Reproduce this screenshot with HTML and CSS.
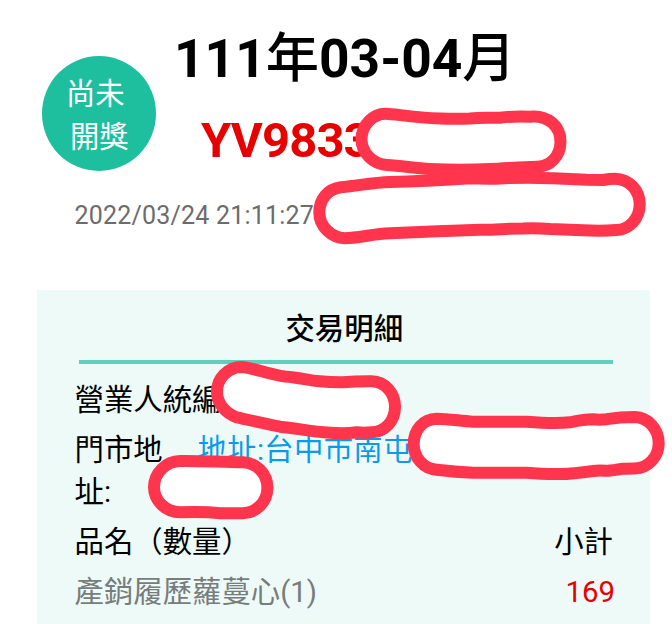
FILE: index.html
```html
<!DOCTYPE html>
<html lang="zh-Hant">
<head>
<meta charset="utf-8">
<title>交易明細</title>
<link rel="stylesheet" href="styles.css">
</head>
<body>
<main class="screen">
  <header class="summary">
    <div class="status"><span>尚未</span><span class="status-second">開獎</span></div>
    <div class="invoice">
      <h1 class="period">111<b>年</b>03-04<b>月</b></h1>
      <div class="number">YV9833</div>
    </div>
  </header>
  <time class="issued">2022/03/24 21:11:27</time>
  <section class="card">
    <h2 class="card-title">交易明細</h2>
    <div class="row">營業人統編</div>
    <div class="row"><span class="label">門市地址:</span><a class="address">地址:台中市南屯</a></div>
    <div class="row"><span>品名（數量）</span><span class="amount">小計</span></div>
    <div class="row item"><span>產銷履歷蘿蔓心(1)</span><span class="amount price">169</span></div>
  </section>
  <svg class="marks" width="672" height="624" viewBox="0 0 672 624">
    <path d="M386 113.7C396 114 412 117.5 440 118.5Q455 119 470 118.5C482 117 492 118 500 117.7Q515 116 530 116.7C548 115 560.5 126 560.5 141.7C560.5 156 550 167 537 166.7C520 167 505 168.5 490 169Q460 170.5 430 169C415 168 402 166 387 165C373 164 361.5 153 361.5 139.3C361.5 125 373 113.5 386 113.7Z"/>
    <path d="M341 187.3C365 184.5 375 182.5 390 182Q425 181 466.7 178.5C480 178.5 490 179 500 178.5Q525 177 553 178.3L586.7 179.7L603 180C608 179 612 178.7 615 178.7C629 179 639.7 190 639.7 204.3C639.7 219 629 229.5 616.7 230C605 231 595 231 583 230.3L550 229Q535 228 523 228.5C505 228.5 495 230 480 229.7Q440 231 390 233.3C373 234 358 238 345 238.2C331 238 319.3 226 319.3 212.5C319.3 199 328 189 341 187.3Z"/>
    <path d="M241.7 366.9C251 367 270 375 285 376.5C300 377.5 308 380.5 320 381.3Q332 382.5 343 382.3Q357 381 371.7 381.2C385 381.5 395 393 395 406.7C395 421 385 432 371.7 432.3Q364 433 356.7 432.3Q345 434 330 432.8C310 431.5 298 428.5 280 426.7C262 423.5 250 420 236.7 417.3C225 413 217 403 217 391.7C217 378 228 367 241.7 366.9Z"/>
    <path d="M436.7 418.8C450 419 460 421 473 421.7H526.7Q555 424 570 422.3Q585 419.3 593 419.3Q600 420 606.7 419.2Q620 417 635 417C648 417.5 658.7 429 658.7 443.3C658.7 457 648 468 635 468.4L623 468.7Q611 471 606 470.7Q598 470 593 471Q570 474.5 556.7 474Q540 474 526.7 472.7H473Q455 472 436.7 469.7C423 469 413.7 457 413.7 444C413.7 430 423 419 436.7 418.8Z"/>
    <path d="M180 461C195 460.5 220 462 243.3 462.3C256 463 267.4 473 267.4 487.7C267.4 502 256 513 243 513.2H220Q205 511.5 180 512.3C166 512.3 154 501 154 487.3C154 473 166 461.2 180 461Z"/>
  </svg>
</main>
</body>
</html>
```
FILE: styles.css
```css
* { box-sizing: border-box; }
body {
  margin: 0;
  background: #fff;
  color: #000;
  font-family: Roboto, "Noto Sans CJK TC", sans-serif;
}
.screen {
  position: relative;
  width: 672px;
  height: 624px;
  overflow: hidden;
}
.summary { display: flex; height: 190px; padding-left: 42px; }
.status {
  display: flex;
  flex-direction: column;
  width: 114px;
  height: 115px;
  margin-top: 56px;
  padding: 17px 0 0 24px;
  border-radius: 50%;
  background: #1dbf9f;
  color: #fff;
  font-size: 29.3px;
  line-height: 43px;
  font-weight: 400;
}
.status-second { padding-left: 4px; }
.invoice { padding: 19px 0 0 18px; }
.period {
  margin: 0;
  font-size: 53.3px;
  line-height: 80px;
  font-weight: 700;
  white-space: nowrap;
}
.period b { font-weight: 500; }
.number {
  padding: 6px 0 0 27px;
  color: #e60000;
  font-size: 49px;
  letter-spacing: -0.9px;
  line-height: 72px;
  font-weight: 700;
}
.issued {
  display: block;
  height: 100px;
  padding: 7px 0 0 74.5px;
  color: #6c6c6c;
  font-size: 25px;
  line-height: 38px;
  letter-spacing: 0.2px;
}
.card {
  width: 613px;
  height: 334px;
  margin-left: 37px;
  padding: 0 37px 0 37.5px;
  background: #eefaf7;
  font-size: 29.4px;
  line-height: 42px;
}
.card-title {
  height: 74px;
  margin: 0 0 15px 4px;
  padding: 18px 3px 0 0;
  border-bottom: 4px solid #5fd0bb;
  font-size: 29.4px;
  line-height: 42px;
  font-weight: 500;
  text-align: center;
}
.row { display: flex; margin-bottom: 8px; }
.label { width: 123px; padding-right: 30px; word-break: break-all; }
.address { color: #0c9be9; white-space: nowrap; letter-spacing: 0.3px; }
.amount { margin-left: auto; }
.item { color: #777d7b; }
.price { margin-right: -2px; color: #e60000; }
.marks { position: absolute; inset: 0; }
.marks path { fill: #fff; stroke: #ff344d; stroke-width: 12; stroke-linejoin: round; }
```
